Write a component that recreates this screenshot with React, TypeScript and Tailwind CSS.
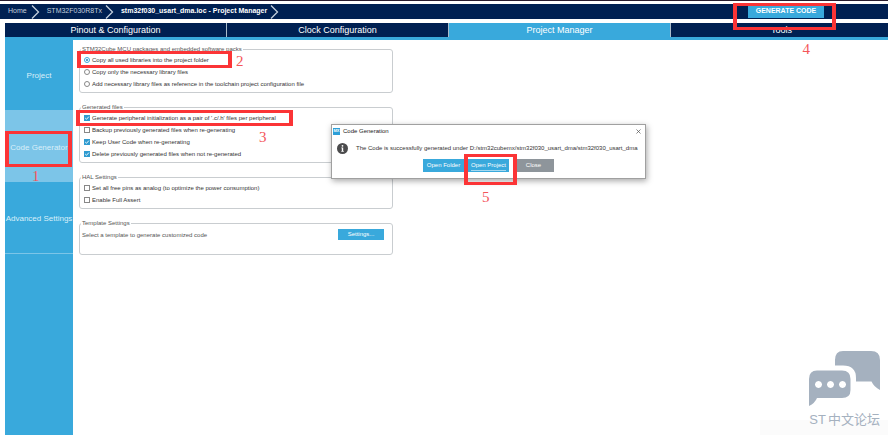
import type { ReactNode } from 'react'
import { X } from 'lucide-react'

interface Option {
  label: string
  checked?: boolean
}

const TABS = ['Pinout & Configuration', 'Clock Configuration', 'Project Manager', 'Tools']

const LIBRARY_OPTIONS: Option[] = [
  { label: 'Copy all used libraries into the project folder', checked: true },
  { label: 'Copy only the necessary library files' },
  { label: 'Add necessary library files as reference in the toolchain project configuration file' },
]

const FILE_OPTIONS: Option[] = [
  { label: "Generate peripheral initialization as a pair of '.c/.h' files per peripheral", checked: true },
  { label: 'Backup previously generated files when re-generating' },
  { label: 'Keep User Code when re-generating', checked: true },
  { label: 'Delete previously generated files when not re-generated', checked: true },
]

const HAL_OPTIONS: Option[] = [
  { label: 'Set all free pins as analog (to optimize the power consumption)' },
  { label: 'Enable Full Assert' },
]

function Chevron() {
  return (
    <svg viewBox="0 0 9 14" className="h-[14px] w-[9px] flex-shrink-0" fill="none" stroke="#c3cfdd" strokeWidth="1.3">
      <path d="M1 0.5 L7.5 7 L1 13.5" />
    </svg>
  )
}

function Group({ title, children }: { title: string; children: ReactNode }) {
  return (
    <fieldset className="rounded-[3px] border border-[#c9cdd0] pb-[2px]">
      <legend className="ml-px px-px text-[6px] leading-[8px] text-[#555]">{title}</legend>
      <div className="pt-px">{children}</div>
    </fieldset>
  )
}

function RadioRow({ label, checked }: Option) {
  return (
    <label className="flex h-3 items-center gap-[2px] pl-[4px] whitespace-nowrap">
      <span className="relative h-[6px] w-[6px]">
        <input
          type="radio"
          name="library"
          defaultChecked={checked}
          className="peer block h-[6px] w-[6px] appearance-none rounded-full border border-[#888] bg-white checked:border-[#39a9dc]"
        />
        <span className="pointer-events-none absolute inset-[2px] hidden rounded-full bg-[#1685bd] peer-checked:block" />
      </span>
      {label}
    </label>
  )
}

function CheckRow({ label, checked }: Option) {
  return (
    <label className="flex h-3 items-center gap-[2px] pl-[4px] whitespace-nowrap">
      <span className="relative h-[6px] w-[6px]">
        <input
          type="checkbox"
          defaultChecked={checked}
          className="peer block h-[6px] w-[6px] appearance-none border border-[#888] bg-white checked:border-[#2f9bd0] checked:bg-[#2f9bd0]"
        />
        <svg viewBox="0 0 6 6" className="pointer-events-none absolute inset-0 hidden peer-checked:block" fill="none" stroke="#fff" strokeWidth="0.9">
          <path d="M1.2 3 L2.5 4.3 L4.9 1.6" />
        </svg>
      </span>
      {label}
    </label>
  )
}

// Red frame plus step number, laid over the window
function Step({ box, digit, children }: { box: string; digit: string; children: string }) {
  return (
    <>
      <div className={`pointer-events-none absolute z-20 border-x-4 border-y-[3px] border-[#fb3436] ${box}`} />
      <span
        className={`absolute z-20 font-['Liberation_Serif',serif] text-[15px] leading-[14px] text-[#f4565a] ${digit}`}
      >
        {children}
      </span>
    </>
  )
}

function Dialog() {
  return (
    <div
      role="dialog"
      aria-label="Code Generation"
      className="absolute top-[124px] left-[331px] z-10 w-[315px] border border-[#a0a0a0] bg-white pb-[6px] text-[6px] text-[#333] shadow-[1px_2px_6px_rgba(0,0,0,0.35)]"
    >
      <div className="flex h-3 items-center gap-[3px] pr-[3px] pl-px">
        <span className="flex h-[7px] w-[7px] items-center justify-center bg-[#2d9fd8] text-[4px] leading-none font-bold text-white">
          MX
        </span>
        <span className="text-[#222]">Code Generation</span>
        <button type="button" aria-label="Close dialog" className="ml-auto">
          <X size={7} strokeWidth={2.5} className="text-[#555]" />
        </button>
      </div>
      <div className="flex h-[22px] items-center gap-2 pl-[5px]">
        <svg viewBox="0 0 11 11" className="h-[11px] w-[11px] flex-shrink-0">
          <circle cx="5.5" cy="5.5" r="5.5" fill="#4b4b4d" />
          <circle cx="5.5" cy="2.8" r="0.9" fill="#fff" />
          <path d="M4.3 4.5h1.9v3.4h.6v.8H4.3v-.8h.5V5.3h-.5z" fill="#fff" />
        </svg>
        <p className="whitespace-nowrap">
          The Code is successfully generated under D:/stm32cubemx/stm32f030_usart_dma/stm32f030_usart_dma
        </p>
      </div>
      <div className="flex justify-center gap-1 text-white">
        <button type="button" className="h-[13px] w-[41px] bg-[#39a9dc]">Open Folder</button>
        <button type="button" className="flex h-[13px] w-[41px] items-center justify-center bg-[#39a9dc]">
          <span className="border-b border-[#a5d8ef] leading-[9px]">Open Project</span>
        </button>
        <button type="button" className="h-[13px] w-[41px] bg-[#8e959b]">Close</button>
      </div>
    </div>
  )
}

function ForumMark() {
  return (
    <div className="absolute right-0 bottom-0 flex w-32 flex-col items-end pr-2 pb-[6px] text-[#a5b1bf]">
      <div className="absolute inset-x-0 bottom-0 h-[15px] bg-[#fbfbfb]" />
      <svg viewBox="0 0 71 56" className="relative h-14 w-[71px]" fill="currentColor">
        <path d="M34 0H62Q71 0 71 9V39Q65 36 62.500 30.500H47V27Q47 14.500 34 14.500H26V9Q26 0 34 0Z" />
        <path
          fillRule="evenodd"
          d="M8 19.500H33Q41.500 19.500 41.500 28V39Q41.500 47 33 47H8Q6 52 0 55V28Q0 19.500 8 19.500ZM9.500 30a3.500 3.500 0 1 0 .01 0ZM21.500 30a3.500 3.500 0 1 0 .01 0ZM33.500 30a3.500 3.500 0 1 0 .01 0Z"
        />
      </svg>
      <div className="relative mt-1 flex gap-[2px] font-['Liberation_Sans','Noto_Sans_CJK_SC',sans-serif] text-[13px] leading-[18px] whitespace-nowrap">
        <span>ST</span>
        <span>中文论坛</span>
      </div>
    </div>
  )
}

export default function App() {
  return (
    <div className="relative flex min-h-screen flex-col overflow-hidden bg-white font-['Liberation_Sans',Arial,sans-serif]">
      <div className="h-px bg-[#2a1c2e]" />

      {/* Breadcrumb bar */}
      <header className="mt-[3px] flex h-[15px] items-center bg-[#002052] pr-16 pl-2 text-[7px] whitespace-nowrap text-[#c3cfdd]">
        <nav className="flex items-center">
          <a href="#home" className="mr-1">Home</a>
          <Chevron />
          <a href="#mcu" className="mr-[3px] ml-[7px]">STM32F030R8Tx</a>
          <Chevron />
          <a href="#project" className="mr-[3px] ml-[7px] font-bold text-white">stm32f030_usart_dma.ioc - Project Manager</a>
          <Chevron />
        </nav>
        <button type="button" className="ml-auto h-[14px] w-[76px] self-start bg-[#39a9dc] font-bold text-white">
          GENERATE CODE
        </button>
      </header>

      {/* Main tabs */}
      <div role="tablist" className="mt-1 -mr-[5px] ml-[5px] grid grid-cols-4 border-b-[3px] border-[#39a9dc] bg-[#002052]">
        {TABS.map(tab => (
          <button
            key={tab}
            type="button"
            role="tab"
            aria-selected={tab === 'Project Manager'}
            className="h-[14px] border-r border-[#a9bccd] text-[9px] leading-[14px] text-white aria-selected:bg-[#39a9dc]"
          >
            {tab}
          </button>
        ))}
      </div>

      <div className="flex flex-1 pl-[5px]">
        <aside className="flex w-[68px] flex-col bg-[#39a9dc] text-[8px] whitespace-nowrap text-[#d9eff9]">
          <button type="button" className="h-[71px] border-b border-[#7cc5e8] pt-[2px]">Project</button>
          <button type="button" className="h-[71px] bg-[#7cc5e8] pt-[2px]">Code Generator</button>
          <button type="button" className="h-[72px] border-b border-[#7cc5e8] pt-[2px]">Advanced Settings</button>
        </aside>

        <main className="ml-[6px] flex w-[314px] flex-col gap-[10px] pt-[5px] text-[6px] text-[#333]">
          <Group title="STM32Cube MCU packages and embedded software packs">
            {LIBRARY_OPTIONS.map(option => <RadioRow key={option.label} {...option} />)}
          </Group>
          <Group title="Generated files">
            {FILE_OPTIONS.map(option => <CheckRow key={option.label} {...option} />)}
          </Group>
          <Group title="HAL Settings">
            {HAL_OPTIONS.map(option => <CheckRow key={option.label} {...option} />)}
          </Group>
          <Group title="Template Settings">
            <div className="flex h-6 items-start justify-between pt-px pr-2 pl-[2px] leading-[12px] text-[#555]">
              <span>Select a template to generate customized code</span>
              <button type="button" className="h-[11px] w-[46px] bg-[#39a9dc] leading-[11px] text-white">Settings...</button>
            </div>
          </Group>
        </main>
      </div>

      <ForumMark />
      <Dialog />

      <Step box="left-[5px] top-[131px] h-[36px] w-[67px]" digit="left-[32px] top-[169px]">1</Step>
      <Step box="left-[77px] top-[51px] h-[17px] w-[155px]" digit="left-[236px] top-[54px]">2</Step>
      <Step box="left-[76px] top-[110px] h-[16px] w-[217px]" digit="left-[259px] top-[130px]">3</Step>
      <Step box="right-[52px] top-[3px] h-[27px] w-[103px]" digit="right-[78px] top-[42px]">4</Step>
      <Step box="left-[464px] top-[154px] h-[31px] w-[53px]" digit="left-[482px] top-[190px]">5</Step>
    </div>
  )
}
